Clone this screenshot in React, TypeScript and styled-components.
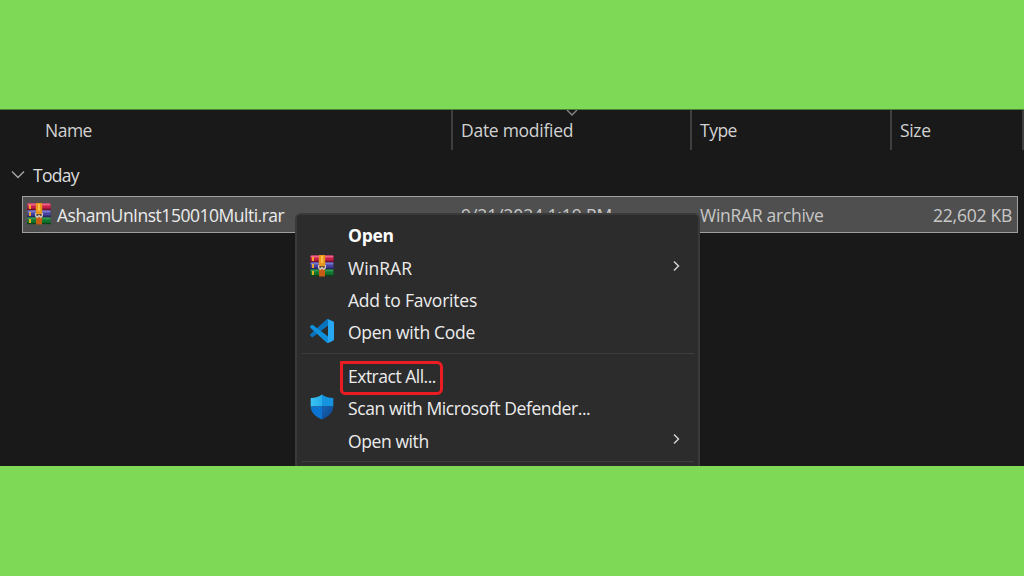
import React from 'react';
import styled, { createGlobalStyle, css } from 'styled-components';

const GlobalStyle = createGlobalStyle`
  * {
    box-sizing: border-box;
  }
  body {
    margin: 0;
    overflow: hidden;
    background: #7ed957;
    font-family: 'Open Sans', 'Noto Sans', sans-serif;
  }
`;

const Page = styled.div`
  display: flex;
  flex-direction: column;
  width: 1024px;
  height: 576px;
  padding-top: 109px;
  background: #7ed957;
`;
const Explorer = styled.main`
  position: relative;
  display: flex;
  flex-direction: column;
  height: 357px;
  overflow: hidden;
  border-top: 1px solid #4b8039;
  background: #191919;
`;

interface LabelProps {
  track?: number;
  tone?: string;
  strong?: boolean;
}
const Label = styled.span<LabelProps>`
  font-size: 17.5px;
  line-height: 24px;
  white-space: nowrap;
  letter-spacing: ${(props) => props.track || 0}px;
  color: ${(props) => props.tone || 'inherit'};
  ${(props) =>
    props.strong &&
    css`
      font-weight: 700;
      color: #ffffff;
    `}
`;

const HeaderRow = styled.div`
  display: grid;
  grid-template-columns: 453px 239px 200px 132px;
  height: 40px;
  color: #d2d2d2;
`;
const HeaderCell = styled.div<{ indent: number }>`
  position: relative;
  padding: 8px 0 0 ${(props) => props.indent}px;
  border-right: 2px solid #3f3f3f;
`;
const SortMark = styled.svg`
  position: absolute;
  top: 0;
  left: 113px;
`;

const Group = styled.div`
  display: flex;
  align-items: center;
  gap: 8px;
  height: 46px;
  padding: 3px 0 0 11px;
  color: #dedede;
`;
const FileRow = styled.div`
  display: grid;
  grid-template-columns: 30px 404px 239px 1fr auto;
  align-items: center;
  width: 996px;
  height: 37px;
  margin-left: 22px;
  padding: 1px 5px 0 4px;
  border: 1px solid #a0a0a0;
  background: #4f4f4f;
  color: #c8c8c8;
`;
const FileIcon = styled.span`
  display: flex;
  padding-bottom: 2px;
`;

const Menu = styled.div`
  position: absolute;
  top: 103px;
  left: 295px;
  width: 405px;
  height: 300px;
  padding: 4px 4px 5px 5px;
  border: 2px solid #3a3a3a;
  border-radius: 6px;
  background: #2c2c2c;
  color: #ececec;
`;
const MenuItem = styled.div`
  position: relative;
  display: grid;
  grid-template-columns: 46px 1fr 22px;
  align-items: center;
  height: 32.4px;
`;
const IconSlot = styled.span`
  display: flex;
  padding: 0 0 3px 8px;
`;
const ArrowSlot = styled.span`
  display: flex;
  padding-bottom: 3px;
`;
const Divider = styled.hr`
  height: 1px;
  margin: 4px 0 6px;
  border: 0;
  background: #3d3d3d;
`;
const Highlight = styled.div`
  position: absolute;
  top: 1px;
  left: 38px;
  width: 103px;
  height: 34px;
  border: 3px solid #ec1c24;
  border-radius: 1px 6px 6px 5px;
`;

const RarIcon: React.FC = () => (
  <svg width="24" height="22" viewBox="0 0 24 22">
    <rect x="0.5" y="0.5" width="23" height="6.5" rx="1" fill="#c81e4b" />
    <rect x="0.5" y="0.5" width="23" height="2" rx="1" fill="#ee6288" />
    <rect x="0.5" y="7.5" width="23" height="6.5" rx="1" fill="#4643a0" />
    <rect x="0.5" y="7.5" width="23" height="2" rx="1" fill="#7d78cf" />
    <rect x="0.5" y="14.5" width="23" height="6.5" rx="1" fill="#12742f" />
    <rect x="0.5" y="14.5" width="23" height="2" rx="1" fill="#2f9550" />
    <rect x="0" y="5.5" width="24" height="1.5" fill="#79112f" />
    <rect x="0" y="12.5" width="24" height="1.5" fill="#292462" />
    <rect x="0" y="19.7" width="24" height="1.5" fill="#08451a" />
    <path d="M3 2v4M3 9v4M3 16v4" stroke="#f6b322" strokeWidth="1.8" />
    <rect x="8.8" y="0" width="6.4" height="11" rx="1" fill="#e9961d" />
    <path d="M12 1v7" stroke="#ffc650" strokeWidth="1.6" />
    <rect x="9" y="11" width="6" height="3" fill="#5d4630" />
    <rect x="9" y="14" width="6" height="7.5" fill="#c65c14" />
    <path
      d="M8.7 10v3l1.6 1.3L12 12.500l1.700 1.800 1.600-1.300V10"
      fill="none"
      stroke="#cfcbc4"
      strokeWidth="1.3"
    />
  </svg>
);

const CodeIcon: React.FC = () => (
  <svg width="24" height="24" viewBox="0 0 100 100">
    <path
      d="M96.5 10.8 75.9.9a6.2 6.2 0 0 0-7.1 1.2L1.3 63.6a4.2 4.2 0 0 0 0 6.1l5.5 5a4.2 4.2 0 0 0 5.3.3L93.4 13.4c2.7-2.1 6.6-.1 6.6 3.3v-.3c0-2.4-1.4-4.6-3.5-5.6Z"
      fill="#0873bd"
    />
    <path
      d="M96.5 89.2 75.9 99.1a6.2 6.2 0 0 1-7.1-1.2L1.3 36.4a4.2 4.2 0 0 1 0-6.1l5.5-5a4.2 4.2 0 0 1 5.3-.3l81.3 61.6c2.7 2.1 6.6.1 6.6-3.3v.3c0 2.4-1.4 4.6-3.5 5.6Z"
      fill="#1090da"
    />
    <path
      d="M75.9 99.1a6.2 6.2 0 0 1-7.1-1.2c2.3 2.3 6.2.7 6.2-2.6V4.7c0-3.3-3.9-4.9-6.2-2.6A6.2 6.2 0 0 1 75.9.9l20.6 9.9c2.1 1 3.5 3.2 3.5 5.6v67.2c0 2.4-1.4 4.6-3.5 5.6Z"
      fill="#27a8f2"
    />
  </svg>
);

const ShieldIcon: React.FC = () => (
  <svg width="24" height="26" viewBox="0 0 24 26">
    <defs>
      <clipPath id="shield">
        <path d="M12 .5c2.8 2.2 6.5 3.4 11.3 3.5v8.6c0 5.8-4.3 10-11.3 12.8C5 22.6.7 18.4.7 12.6V4C5.5 3.9 9.2 2.7 12 .5Z" />
      </clipPath>
      <linearGradient id="shieldTop">
        <stop offset="0" stopColor="#3cc6f4" />
        <stop offset="1" stopColor="#27aceb" />
      </linearGradient>
      <linearGradient id="shieldBottom" x2="1" y2="1">
        <stop offset="0" stopColor="#1464b8" />
        <stop offset="1" stopColor="#0f4387" />
      </linearGradient>
    </defs>
    <g clipPath="url(#shield)">
      <rect width="12" height="12.5" fill="url(#shieldTop)" />
      <rect x="12" width="12" height="12.5" fill="#1593df" />
      <rect y="12.5" width="12" height="13.5" fill="#0c75d2" />
      <rect x="12" y="12.5" width="12" height="13.5" fill="url(#shieldBottom)" />
    </g>
  </svg>
);

const Arrow: React.FC = () => (
  <svg width="10" height="12" viewBox="0 0 10 12">
    <path
      d="m2 1.5 4.500 4.500L2 10.500"
      fill="none"
      stroke="#d0d0d0"
      strokeWidth="1.5"
    />
  </svg>
);

interface Entry {
  text: string;
  track?: number;
  strong?: boolean;
  icon?: React.ReactNode;
  submenu?: boolean;
  highlighted?: boolean;
}

const openEntries: Entry[] = [
  { text: 'Open', track: -0.3, strong: true },
  { text: 'WinRAR', icon: <RarIcon />, submenu: true },
  { text: 'Add to Favorites', track: -0.2 },
  { text: 'Open with Code', track: -0.28, icon: <CodeIcon /> },
];
const fileEntries: Entry[] = [
  { text: 'Extract All...', track: -0.5, highlighted: true },
  {
    text: 'Scan with Microsoft Defender...',
    track: -0.4,
    icon: <ShieldIcon />,
  },
  { text: 'Open with', track: -0.4, submenu: true },
];

const renderEntry = (entry: Entry) => (
  <MenuItem key={entry.text}>
    <IconSlot>{entry.icon}</IconSlot>
    <Label strong={entry.strong} track={entry.track}>
      {entry.text}
    </Label>
    {entry.submenu && (
      <ArrowSlot>
        <Arrow />
      </ArrowSlot>
    )}
    {entry.highlighted && <Highlight />}
  </MenuItem>
);

const App: React.FC = () => (
  <>
    <GlobalStyle />
    <Page>
      <Explorer>
        <HeaderRow>
          <HeaderCell indent={45}>
            <Label track={-0.5}>Name</Label>
          </HeaderCell>
          <HeaderCell indent={8}>
            <Label track={-0.27}>Date modified</Label>
            <SortMark width="12" height="7" viewBox="0 0 12 7">
              <path
                d="m1 0 5 5 5-5"
                fill="none"
                stroke="#858585"
                strokeWidth="1.4"
              />
            </SortMark>
          </HeaderCell>
          <HeaderCell indent={8}>
            <Label track={-0.5}>Type</Label>
          </HeaderCell>
          <HeaderCell indent={8}>
            <Label track={-0.35}>Size</Label>
          </HeaderCell>
        </HeaderRow>
        <Group>
          <svg width="14" height="10" viewBox="0 0 14 10">
            <path
              d="m1 1.5 6 6 6-6"
              fill="none"
              stroke="#a5a5a5"
              strokeWidth="1.4"
            />
          </svg>
          <Label track={-0.7}>Today</Label>
        </Group>
        <FileRow>
          <FileIcon>
            <RarIcon />
          </FileIcon>
          <Label track={-0.49} tone="#ececec">
            AshamUnInst150010Multi.rar
          </Label>
          <Label track={-0.1}>9/21/2024 1:19 PM</Label>
          <Label track={-0.28}>WinRAR archive</Label>
          <Label track={-0.25}>22,602 KB</Label>
        </FileRow>
        <Menu>
          {openEntries.map(renderEntry)}
          <Divider />
          {fileEntries.map(renderEntry)}
          <Divider />
        </Menu>
      </Explorer>
    </Page>
  </>
);

export default App;
